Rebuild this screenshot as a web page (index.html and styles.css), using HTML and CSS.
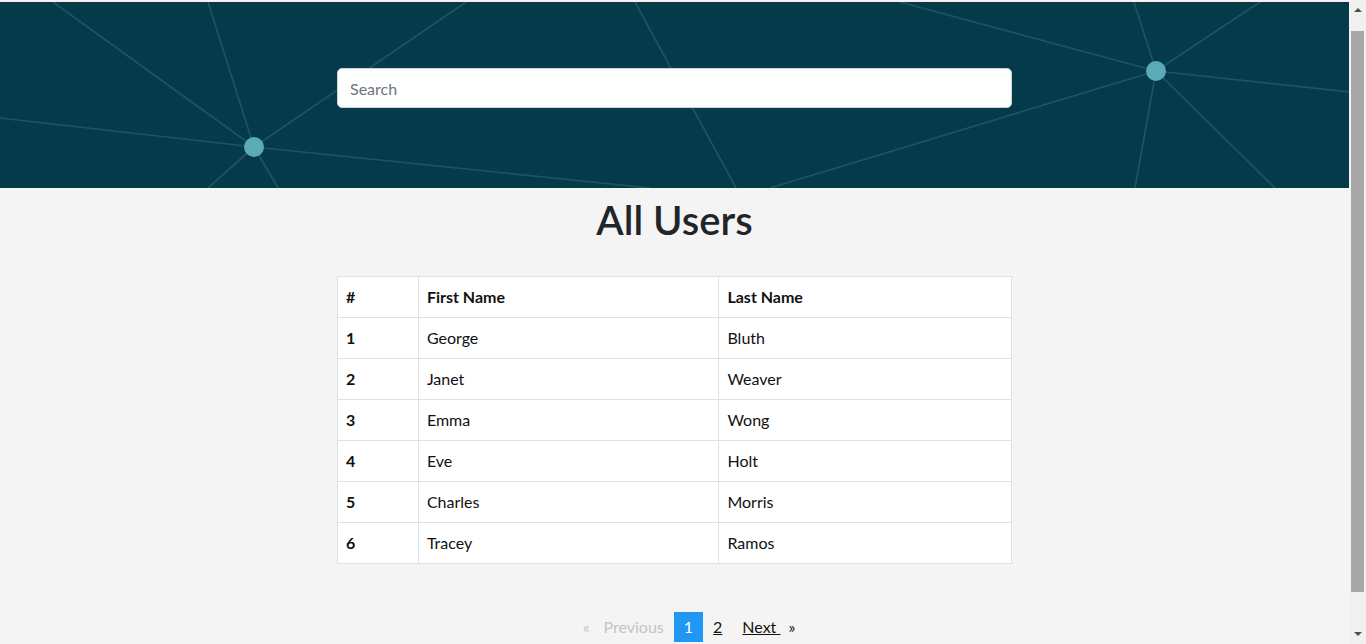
FILE: index.html
```html
<!DOCTYPE html>
<html lang="en">
<head>
<meta charset="utf-8">
<title>All Users</title>
<link rel="stylesheet" href="styles.css">
</head>
<body>
<div class="page">
<header class="hero">
  <svg class="hero-bg" viewBox="0 0 1350 186" preserveAspectRatio="xMinYMin slice" aria-hidden="true">
    <g class="net-lines">
      <line x1="254" y1="145" x2="53" y2="0"/>
      <line x1="254" y1="145" x2="208" y2="0"/>
      <line x1="254" y1="145" x2="0" y2="116"/>
      <line x1="254" y1="145" x2="466" y2="0"/>
      <line x1="254" y1="145" x2="650" y2="186"/>
      <line x1="254" y1="145" x2="208" y2="186"/>
      <line x1="254" y1="145" x2="278" y2="186"/>
      <line x1="635" y1="0" x2="736" y2="186"/>
      <line x1="1156" y1="69" x2="900" y2="0"/>
      <line x1="1156" y1="69" x2="770" y2="186"/>
      <line x1="1156" y1="69" x2="1134" y2="0"/>
      <line x1="1156" y1="69" x2="1260" y2="0"/>
      <line x1="1156" y1="69" x2="1350" y2="90"/>
      <line x1="1156" y1="69" x2="1135" y2="186"/>
      <line x1="1156" y1="69" x2="1275" y2="186"/>
    </g>
    <g class="net-nodes">
      <circle cx="254" cy="145" r="10"/>
      <circle cx="1156" cy="69" r="10"/>
    </g>
  </svg>
  <div class="hero-inner">
    <input class="search" type="text" placeholder="Search">
  </div>
</header>

<main class="container">
  <h1 class="title">All Users</h1>
  <table class="users">
    <colgroup>
      <col class="col-id">
      <col class="col-first">
      <col class="col-last">
    </colgroup>
    <thead>
      <tr><th>#</th><th>First Name</th><th>Last Name</th></tr>
    </thead>
    <tbody>
      <tr><th>1</th><td>George</td><td>Bluth</td></tr>
      <tr><th>2</th><td>Janet</td><td>Weaver</td></tr>
      <tr><th>3</th><td>Emma</td><td>Wong</td></tr>
      <tr><th>4</th><td>Eve</td><td>Holt</td></tr>
      <tr><th>5</th><td>Charles</td><td>Morris</td></tr>
      <tr><th>6</th><td>Tracey</td><td>Ramos</td></tr>
    </tbody>
  </table>

  <nav class="pager">
    <ul class="pager-list">
      <li class="pager-item disabled"><span class="arrow-left">«</span>Previous</li>
      <li class="pager-item active">1</li>
      <li class="pager-item"><a href="#" class="pager-link">2</a></li>
      <li class="pager-item"><a href="#" class="pager-link">Next&nbsp;</a><span class="arrow-right">»</span></li>
    </ul>
  </nav>
</main>
</div>

<div class="scrollbar" aria-hidden="true">
  <span class="sb-arrow sb-up"></span>
  <span class="sb-thumb"></span>
  <span class="sb-arrow sb-down"></span>
</div>
</body>
</html>
```

FILE: styles.css
```css
html, body {
  margin: 0;
  padding: 0;
}

body {
  background: #f4f4f4;
  font-family: Lato, "Liberation Sans", sans-serif;
  color: #212529;
  font-size: 16px;
  line-height: 24px;
}

.page {
  margin-right: 17px;
  border-top: 2px solid #f7f0f0;
}

.hero {
  position: relative;
  height: 186px;
  background: #053a4b;
  overflow: hidden;
}

.hero-bg {
  position: absolute;
  left: 0;
  top: 0;
  width: 100%;
  height: 100%;
}

.net-lines line {
  stroke: #1c5466;
  stroke-width: 1.7;
}

.net-nodes circle {
  fill: #5aaab8;
}

.hero-inner {
  position: relative;
  width: 675px;
  margin: 0 auto;
  padding-top: 66px;
}

.search {
  display: block;
  box-sizing: border-box;
  width: 100%;
  height: 40px;
  padding: 0 12px;
  border: 1px solid #ced4da;
  border-radius: 5px;
  background: #fff;
  font-family: Lato, "Liberation Sans", sans-serif;
  font-size: 16px;
  color: #495057;
  outline: none;
}

.search::placeholder {
  color: #6c757d;
}

.container {
  width: 675px;
  margin: 0 auto;
  padding-bottom: 58px;
}

.title {
  margin: 8px 0 32px;
  text-align: center;
  font-size: 40px;
  line-height: 48px;
  font-weight: 600;
  color: #212529;
}

.users {
  width: 100%;
  border-collapse: collapse;
  background: #fff;
  color: #111;
}

.col-id { width: 81px; }
.col-first { width: 301px; }
.col-last { width: 293px; }

.users th,
.users td {
  border: 1px solid #dee2e6;
  padding: 8px;
  text-align: left;
  vertical-align: top;
  line-height: 24px;
}

.users th {
  font-weight: 700;
}

.users td {
  font-weight: 400;
}

.pager {
  margin-top: 48px;
}

.pager-list {
  display: flex;
  justify-content: center;
  list-style: none;
  margin: 0;
  padding: 0 0 0 29px;
}

.pager-item {
  padding: 0 10px;
  line-height: 30px;
  color: #111;
}

.pager-item.disabled {
  color: #c4c4c4;
}

.pager-item.active {
  background: #2196f3;
  color: #fff;
}

.pager-link {
  color: #111;
  text-decoration: underline;
}

.arrow-left {
  margin-right: 14px;
}

.arrow-right {
  margin-left: 8px;
}

/* emulated browser scrollbar */
.scrollbar {
  position: fixed;
  top: 0;
  right: 0;
  width: 16px;
  height: 100vh;
  background: #f1f1f1;
}

.sb-thumb {
  position: absolute;
  left: 1px;
  right: 2px;
  top: 31px;
  bottom: 52px;
  background: #a8a8a8;
}

.sb-arrow {
  position: absolute;
  left: 4px;
  width: 0;
  height: 0;
  border-left: 4px solid transparent;
  border-right: 4px solid transparent;
}

.sb-up {
  top: 8px;
  border-bottom: 4px solid #505050;
}

.sb-down {
  bottom: 8px;
  border-top: 4px solid #505050;
}
```
